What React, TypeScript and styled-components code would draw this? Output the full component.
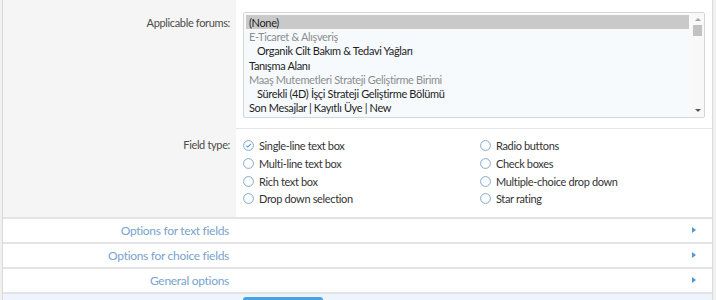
import styled, { createGlobalStyle } from 'styled-components';

const GlobalStyle = createGlobalStyle`
  html, body {
    margin: 0;
    padding: 0;
    background: #f0f0f0;
  }
  body {
    font-family: Lato, "Open Sans", sans-serif;
    font-size: 11px;
    letter-spacing: -0.35px;
    color: #333;
  }
`;

const Page = styled.div`
  width: 709px;
  margin-left: 2px;
  border-left: 1px solid #dadada;
  border-right: 1px solid #dadada;
  background: #fff;
`;

const FormRow = styled.div`
  display: grid;
  grid-template-columns: 233px 1fr;
`;

const Label = styled.div<{ $top: number }>`
  background: #f5f5f5;
  padding: ${(p) => p.$top}px 6px 0 6px;
  color: #4b4b4b;
  display: flex;
  justify-content: flex-end;
`;

const Field = styled.div<{ $first?: boolean }>`
  padding: ${(p) => (p.$first ? '12px 7px 10px 7px' : '8px 7px 9px 7px')};
  border-top: ${(p) => (p.$first ? 'none' : '1px solid #e4e4e4')};
`;

const ListBox = styled.div`
  display: flex;
  height: 104px;
  border: 1px solid #d6d6d6;
  border-radius: 2px;
  background: #f6fafd;
  overflow: hidden;
`;

const Options = styled.div`
  flex: 1;
  padding: 2px 2px 0 2px;
  overflow: hidden;
`;

const Option = styled.div<{ $selected?: boolean; $group?: boolean; $child?: boolean }>`
  height: 14.2px;
  line-height: 15px;
  padding-left: ${(p) => (p.$child ? 11 : 3)}px;
  white-space: nowrap;
  background: ${(p) => (p.$selected ? '#c9c9c9' : 'transparent')};
  color: ${(p) => (p.$group ? '#8d8d8d' : '#1e1e1e')};
`;

const ScrollTrack = styled.div`
  width: 13px;
  display: flex;
  flex-direction: column;
  align-items: center;
  background: #f8f8f8;
`;

const ScrollArrow = styled.div<{ $down?: boolean }>`
  width: 0;
  height: 0;
  margin: ${(p) => (p.$down ? 'auto 0 5px 0' : '5px 0 4px 0')};
  border-left: 3px solid transparent;
  border-right: 3px solid transparent;
  ${(p) => (p.$down ? 'border-top: 3px solid #5a5a5a;' : 'border-bottom: 3px solid #a3a3a3;')}
`;

const ScrollThumb = styled.div`
  width: 9px;
  height: 11px;
  background: #c2c2c2;
`;

const RadioGrid = styled.div`
  display: grid;
  grid-template-columns: 237px 1fr;
  grid-auto-flow: column;
  grid-template-rows: repeat(4, 17.7px);
`;

const RadioItem = styled.label`
  display: flex;
  align-items: center;
  gap: 5px;
  color: #333;
  white-space: nowrap;
`;

const RadioIcon = styled.svg`
  width: 11px;
  height: 11px;
  flex-shrink: 0;
`;

const Collapse = styled.div`
  display: grid;
  grid-template-columns: 233px 1fr 20px;
  align-items: center;
  height: 23px;
  border-top: 2px solid #e3e3e3;
`;

const CollapseTitle = styled.div`
  text-align: right;
  padding-right: 7px;
  font-size: 12px;
  letter-spacing: -0.3px;
  color: #77a3cd;
`;

const Arrow = styled.div`
  width: 0;
  height: 0;
  border-top: 3.5px solid transparent;
  border-bottom: 3.5px solid transparent;
  border-left: 4px solid #4e98d3;
`;

const SubmitBar = styled.div`
  border-top: 2px solid #e3e3e3;
  background: #edf4fb;
  height: 20px;
  padding-left: 240px;
  padding-top: 3px;
`;

const Button = styled.button`
  width: 80px;
  height: 20px;
  border: none;
  border-radius: 3px;
  background: #47a3e6;
`;

const forums = [
  { label: '(None)', selected: true },
  { label: 'E-Ticaret & Alışveriş', group: true },
  { label: 'Organik Cilt Bakım & Tedavi Yağları', child: true },
  { label: 'Tanışma Alanı' },
  { label: 'Maaş Mutemetleri Strateji Geliştirme Birimi', group: true },
  { label: 'Sürekli (4D) İşçi Strateji Geliştirme Bölümü', child: true },
  { label: 'Son Mesajlar | Kayıtlı Üye | New' },
  { label: 'VIP' },
];

const fieldTypes = [
  { label: 'Single-line text box', checked: true },
  { label: 'Multi-line text box' },
  { label: 'Rich text box' },
  { label: 'Drop down selection' },
  { label: 'Radio buttons' },
  { label: 'Check boxes' },
  { label: 'Multiple-choice drop down' },
  { label: 'Star rating' },
];

const sections = ['Options for text fields', 'Options for choice fields', 'General options'];

function Radio({ checked }: { checked?: boolean }) {
  return (
    <RadioIcon viewBox="0 0 11 11">
      <circle cx="5.5" cy="5.5" r="4.9" fill="#fff" stroke="#7fa9d2" strokeWidth="1" />
      {checked && (
        <path d="M3.2 5.6 L4.8 7.1 L7.9 3.9" fill="none" stroke="#5b94cc" strokeWidth="1.1" />
      )}
    </RadioIcon>
  );
}

export default function App() {
  return (
    <>
      <GlobalStyle />
      <Page>
        <FormRow>
          <Label $top={16}>Applicable forums:</Label>
          <Field $first>
            <ListBox>
              <Options>
                {forums.map((f) => (
                  <Option key={f.label} $selected={f.selected} $group={f.group} $child={f.child}>
                    {f.label}
                  </Option>
                ))}
              </Options>
              <ScrollTrack>
                <ScrollArrow />
                <ScrollThumb />
                <ScrollArrow $down />
              </ScrollTrack>
            </ListBox>
          </Field>
        </FormRow>

        <FormRow>
          <Label $top={10}>Field type:</Label>
          <Field>
            <RadioGrid>
              {fieldTypes.map((t) => (
                <RadioItem key={t.label}>
                  <Radio checked={t.checked} />
                  {t.label}
                </RadioItem>
              ))}
            </RadioGrid>
          </Field>
        </FormRow>

        {sections.map((s) => (
          <Collapse key={s}>
            <CollapseTitle>{s}</CollapseTitle>
            <span />
            <Arrow />
          </Collapse>
        ))}

        <SubmitBar>
          <Button />
        </SubmitBar>
      </Page>
    </>
  );
}
